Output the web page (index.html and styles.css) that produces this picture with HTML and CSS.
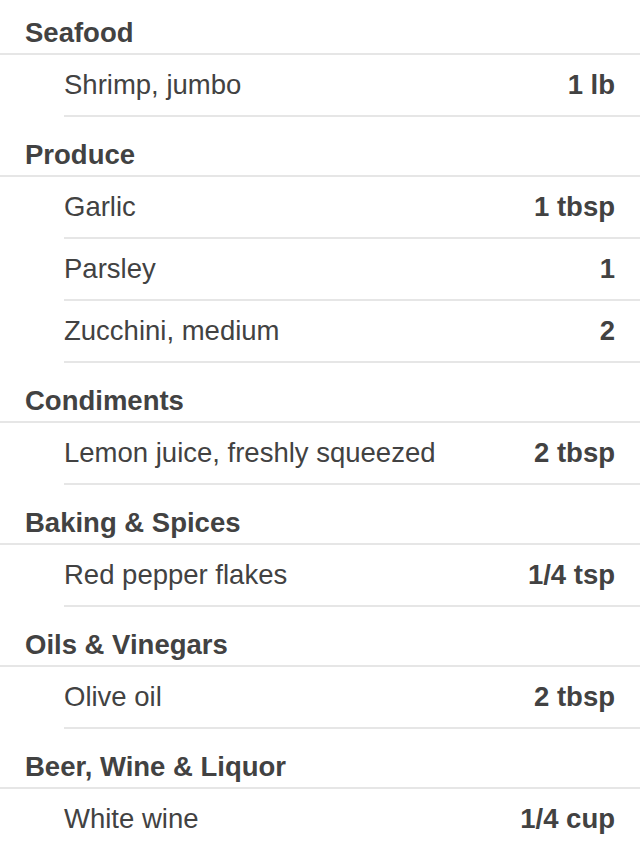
FILE: index.html
```html
<!DOCTYPE html>
<html lang="en">
<head>
  <meta charset="UTF-8">
  <meta name="viewport" content="width=device-width, initial-scale=1">
  <title>Ingredients</title>
  <link rel="stylesheet" href="styles.css">
</head>
<body>
  <div class="list">
    <div class="group">Seafood</div>
    <div class="item"><span>Shrimp, jumbo</span><b>1 lb</b></div>

    <div class="group">Produce</div>
    <div class="item"><span>Garlic</span><b>1 tbsp</b></div>
    <div class="item"><span>Parsley</span><b>1</b></div>
    <div class="item"><span>Zucchini, medium</span><b>2</b></div>

    <div class="group">Condiments</div>
    <div class="item"><span>Lemon juice, freshly squeezed</span><b>2 tbsp</b></div>

    <div class="group">Baking &amp; Spices</div>
    <div class="item"><span>Red pepper flakes</span><b>1/4 tsp</b></div>

    <div class="group">Oils &amp; Vinegars</div>
    <div class="item"><span>Olive oil</span><b>2 tbsp</b></div>

    <div class="group">Beer, Wine &amp; Liquor</div>
    <div class="item"><span>White wine</span><b>1/4 cup</b></div>
  </div>
</body>
</html>
```
FILE: styles.css
```css
* { margin: 0; padding: 0; box-sizing: border-box; }
html, body {
  height: 100%;
  overflow: hidden;
}
body {
  font-family: 'Liberation Sans', Arial, sans-serif;
  font-size: 27.5px;
  color: #424242;
  background: #fff;
}
.list {
  margin-top: -5px;
}
.group {
  height: 60px;
  display: flex;
  align-items: flex-end;
  padding: 0 25px 5px;
  line-height: 30px;
  font-weight: bold;
  border-bottom: 2px solid #e6e6e6;
}
.item {
  height: 62px;
  margin-left: 64px;
  padding: 0 25px 0 0;
  display: flex;
  align-items: center;
  justify-content: space-between;
  line-height: 30px;
  border-bottom: 2px solid #e6e6e6;
}
.item b {
  font-weight: bold;
}
```
